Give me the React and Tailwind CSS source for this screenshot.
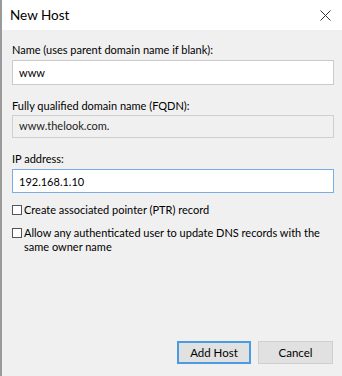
import { useState } from 'react';

function Checkbox({ checked, onChange, children }) {
  return (
    <label className="flex items-start gap-[2px] cursor-default">
      <span
        onClick={onChange}
        className="mt-[2px] w-[10px] h-[10px] shrink-0 border border-[#555] bg-white flex items-center justify-center"
      >
        {checked && <span className="w-[6px] h-[6px] bg-[#333]" />}
      </span>
      <span className="leading-[14px]">{children}</span>
    </label>
  );
}

export default function App() {
  const [name, setName] = useState('www');
  const [ip, setIp] = useState('192.168.1.10');
  const [ptr, setPtr] = useState(false);
  const [allow, setAllow] = useState(false);

  return (
    <div
      className="w-[342px] h-[376px] flex flex-col border-l-2 border-[#9a9a9a] text-[11px] text-black overflow-hidden"
      style={{ fontFamily: '"Segoe UI", Lato, sans-serif' }}
    >
      <div className="h-[30px] shrink-0 bg-white flex items-center justify-between pl-2 pr-[11px]">
        <span className="text-[13.5px]">New Host</span>
        <svg width="11" height="11" viewBox="0 0 11 11">
          <path d="M0.5 0.5 L10.5 10.5 M10.5 0.5 L0.5 10.5" stroke="#333" strokeWidth="1" fill="none" />
        </svg>
      </div>

      <div className="flex-1 bg-[#f0f0f0] flex flex-col pl-[10px] pr-[8px] pt-3">
        <div className="leading-[16px]">Name (uses parent domain name if blank):</div>
        <input
          value={name}
          onChange={(e) => setName(e.target.value)}
          className="mt-[2px] h-[25px] w-full border border-[#cbcbcb] bg-white px-[6px] outline-none"
        />

        <div className="mt-[13px] leading-[16px]">Fully qualified domain name (FQDN):</div>
        <div className="mt-[1px] h-[23px] w-full border border-[#cfcfcf] bg-[#f0f0f0] px-[6px] flex items-center text-[#222]">
          {name ? `${name}.thelook.com.` : 'thelook.com.'}
        </div>

        <div className="mt-[13px] leading-[16px]">IP address:</div>
        <input
          value={ip}
          onChange={(e) => setIp(e.target.value)}
          className="mt-[2px] h-[24px] w-full border border-[#7aaee4] bg-white px-[6px] outline-none"
        />

        <div className="mt-[10px] flex flex-col gap-[9px]">
          <Checkbox checked={ptr} onChange={() => setPtr(!ptr)}>
            Create associated pointer (PTR) record
          </Checkbox>
          <Checkbox checked={allow} onChange={() => setAllow(!allow)}>
            Allow any authenticated user to update DNS records with the same owner name
          </Checkbox>
        </div>

        <div className="mt-auto mb-3 flex justify-end gap-[7px] pr-[1px]">
          <button className="w-[74px] h-[23px] border-2 border-[#4a9be2] bg-[#e1e1e1] text-[11.5px]">Add Host</button>
          <button className="w-[75px] h-[23px] border border-[#cfcfcf] bg-[#e1e1e1] text-[11.5px]">Cancel</button>
        </div>
      </div>
    </div>
  );
}
